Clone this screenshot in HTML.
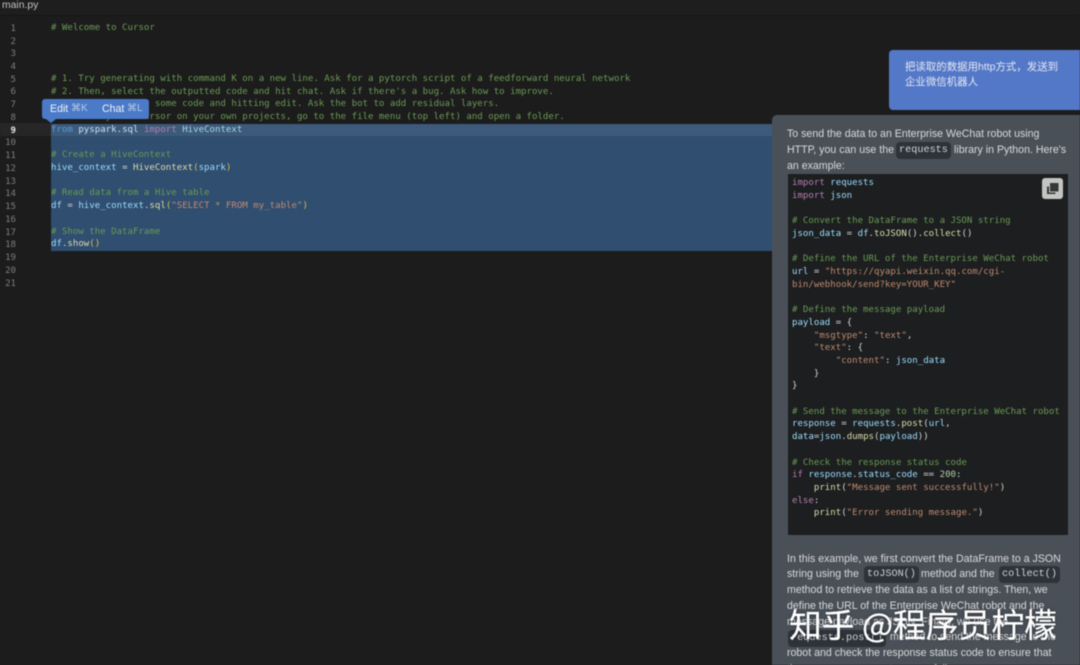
<!DOCTYPE html>
<html lang="zh">
<head>
<meta charset="utf-8">
<title>main.py</title>
<style>
html,body{margin:0;padding:0;width:1080px;height:665px;overflow:hidden;background:#1c1c1c}
#root{position:relative;width:1080px;height:665px;overflow:hidden;background:#1c1c1c;filter:blur(.45px)}
.a{position:absolute;white-space:pre}
.m{font-family:"DejaVu Sans Mono","Liberation Mono",monospace;font-size:9.09px;line-height:13px;height:13px;margin-top:1px}
.n{left:0;width:16px;text-align:right;color:#7a7d80;font-family:"DejaVu Sans Mono","Liberation Mono",monospace;font-size:9.09px;line-height:13px;margin-top:1px}
.s{font-family:"Liberation Sans","Noto Sans CJK SC",sans-serif;font-size:10.6px;line-height:16px;color:#d8dadc;left:787px}
.c{color:#6a9955}.w{color:#d4d4d4}.v{color:#9cdcfe}.f{color:#dcdcaa}.k{color:#b57fb3}.b{color:#569cd6}.t{color:#c08a70}.y{color:#e0bd45}.g{color:#4ec9b0}.l{color:#9cdcfe}
.code{left:792px;font-size:9.08px;line-height:13px;height:13px}
.i{position:absolute;background:#2e333a;border-radius:4px;font-family:"Liberation Mono",monospace;font-size:10.2px;color:#cfd1d3;line-height:18px;height:17px;padding:0 3px;white-space:pre}
</style>
</head>
<body>
<div id="root">
<div class="a" style="left:0;top:0;width:1080px;height:15px;background:#1e1e1e"></div>
<div class="a" style="left:2px;top:-1px;font:10.4px/14px 'Liberation Sans',sans-serif;color:#c0c2c4">main.py</div>
<div class="a" style="left:0;top:15px;width:1080px;height:1px;background:#141414"></div>

<div class="a" style="left:0;top:123px;width:51px;height:13px;background:#262626"></div>
<div class="a" style="left:51px;top:124px;width:730px;height:127px;background:#2f4e70"></div>
<div class="a" style="left:51px;top:124px;width:730px;height:12px;background:#3d5a7b"></div>

<div class="a n" style="top:22px">1</div>
<div class="a n" style="top:35px">2</div>
<div class="a n" style="top:47px">3</div>
<div class="a n" style="top:60px">4</div>
<div class="a n" style="top:73px">5</div>
<div class="a n" style="top:85px">6</div>
<div class="a n" style="top:98px">7</div>
<div class="a n" style="top:111px">8</div>
<div class="a n" style="top:124px;color:#e6e6e6;font-weight:bold">9</div>
<div class="a n" style="top:136px">10</div>
<div class="a n" style="top:149px">11</div>
<div class="a n" style="top:162px">12</div>
<div class="a n" style="top:175px">13</div>
<div class="a n" style="top:187px">14</div>
<div class="a n" style="top:200px">15</div>
<div class="a n" style="top:213px">16</div>
<div class="a n" style="top:226px">17</div>
<div class="a n" style="top:238px">18</div>
<div class="a n" style="top:251px">19</div>
<div class="a n" style="top:264px">20</div>
<div class="a n" style="top:277px">21</div>

<div class="a m c" style="left:51px;top:21px"># Welcome to Cursor</div>
<div class="a m c" style="left:51px;top:72px"># 1. Try generating with command K on a new line. Ask for a pytorch script of a feedforward neural network</div>
<div class="a m c" style="left:51px;top:85px"># 2. Then, select the outputted code and hit chat. Ask if there's a bug. Ask how to improve.</div>
<div class="a m c" style="left:51px;top:97px"># 3. Try selecting some code and hitting edit. Ask the bot to add residual layers.</div>
<div class="a m c" style="left:51px;top:110px"># 4. To try out cursor on your own projects, go to the file menu (top left) and open a folder.</div>
<div class="a m" style="left:51px;top:123px"><span class="b">from</span> <span class="v" style="color:#c8e4f4">pyspark.sql</span> <span class="k">import</span> <span class="v" style="color:#a5d8e6">HiveContext</span></div>
<div class="a m c" style="left:51px;top:148px"># Create a HiveContext</div>
<div class="a m" style="left:51px;top:161px"><span class="v">hive_context</span> <span class="w">=</span> <span class="f">HiveContext</span><span class="y">(</span><span class="v">spark</span><span class="y">)</span></div>
<div class="a m c" style="left:51px;top:186px"># Read data from a Hive table</div>
<div class="a m" style="left:51px;top:199px"><span class="v">df</span> <span class="w">=</span> <span class="v">hive_context</span><span class="w">.</span><span class="f">sql</span><span class="y">(</span><span class="t">"SELECT * FROM my_table"</span><span class="y">)</span></div>
<div class="a m c" style="left:51px;top:225px"># Show the DataFrame</div>
<div class="a m" style="left:51px;top:237px"><span class="v">df</span><span class="w">.</span><span class="f">show</span><span class="y">()</span></div>

<div class="a" style="left:42px;top:99px;width:107px;height:20px;background:#4a7ac8;border-radius:3px"></div>
<div class="a" style="left:46px;top:119px;width:0;height:0;border-left:5px solid transparent;border-right:5px solid transparent;border-top:4px solid #4a7ac8"></div>
<div class="a" style="left:50px;top:102px;font:10.6px/14px 'Liberation Sans','DejaVu Sans',sans-serif;color:#eef2f8">Edit</div>
<div class="a" style="left:71px;top:102px;font:10px/14px 'Liberation Sans','DejaVu Sans',sans-serif;color:#b9cbe6">⌘K</div>
<div class="a" style="left:102px;top:102px;font:10.6px/14px 'Liberation Sans','DejaVu Sans',sans-serif;color:#eef2f8">Chat</div>
<div class="a" style="left:127px;top:102px;font:10px/14px 'Liberation Sans','DejaVu Sans',sans-serif;color:#b9cbe6">⌘L</div>

<div class="a" style="left:889px;top:50px;width:191px;height:60px;background:#5478c8;border-radius:4px 0 0 4px"></div>
<div class="a" style="left:905px;top:60px;font:10.45px/16px 'Liberation Sans','Noto Sans CJK SC',sans-serif;color:#e4e8f2">把读取的数据用http方式，发送到</div>
<div class="a" style="left:905px;top:75px;font:10.45px/16px 'Liberation Sans','Noto Sans CJK SC',sans-serif;color:#e4e8f2">企业微信机器人</div>

<div class="a" style="left:772px;top:115px;width:308px;height:550px;background:#4a5058;border-radius:5px 0 0 0"></div>
<div class="a s" style="top:126px">To send the data to an Enterprise WeChat robot using</div>
<div class="a s" style="top:142px">HTTP, you can use the</div>
<div class="i" style="left:896px;top:141.500px">requests</div>
<div class="a s" style="left:954px;top:142px">library in Python. Here's</div>
<div class="a s" style="top:158px">an example:</div>

<div class="a" style="left:788px;top:174px;width:280px;height:361px;background:#1c1e1f"></div>
<div class="a" style="left:1042px;top:178px;width:21px;height:21px;background:#c4c5c2;border-radius:3px"></div>
<svg class="a" style="left:1042px;top:178px" width="21" height="21" viewBox="0 0 21 21"><rect x="8" y="5" width="8.500" height="8.500" fill="#34383b"/><path d="M5 8.500h2v6h6.500v1.500H5z" fill="#34383b"/></svg>

<div class="a m code" style="top:176px"><span class="k">import</span> <span class="v">requests</span></div>
<div class="a m code" style="top:189px"><span class="k">import</span> <span class="v">json</span></div>
<div class="a m code c" style="top:214px"># Convert the DataFrame to a JSON string</div>
<div class="a m code" style="top:227px"><span class="v">json_data</span> <span class="w">=</span> <span class="v">df</span><span class="w">.</span><span class="f">toJSON</span><span class="w">().</span><span class="f">collect</span><span class="w">()</span></div>
<div class="a m code c" style="top:252px"># Define the URL of the Enterprise WeChat robot</div>
<div class="a m code" style="top:265px"><span class="v">url</span> <span class="w">=</span> <span class="t">"https://qyapi.weixin.qq.com/cgi-</span></div>
<div class="a m code t" style="top:278px">bin/webhook/send?key=YOUR_KEY"</div>
<div class="a m code c" style="top:303px"># Define the message payload</div>
<div class="a m code" style="top:316px"><span class="v">payload</span> <span class="w">= {</span></div>
<div class="a m code" style="top:329px">    <span class="t">"msgtype"</span><span class="w">:</span> <span class="t">"text"</span><span class="w">,</span></div>
<div class="a m code" style="top:341px">    <span class="t">"text"</span><span class="w">: {</span></div>
<div class="a m code" style="top:354px">        <span class="t">"content"</span><span class="w">:</span> <span class="v">json_data</span></div>
<div class="a m code w" style="top:367px">    }</div>
<div class="a m code w" style="top:379px">}</div>
<div class="a m code c" style="top:405px"># Send the message to the Enterprise WeChat robot</div>
<div class="a m code" style="top:417px"><span class="v">response</span> <span class="w">=</span> <span class="v">requests</span><span class="w">.</span><span class="f">post</span><span class="w">(</span><span class="v">url</span><span class="w">,</span></div>
<div class="a m code" style="top:430px"><span class="v">data</span><span class="w">=</span><span class="v">json</span><span class="w">.</span><span class="f">dumps</span><span class="w">(</span><span class="v">payload</span><span class="w">))</span></div>
<div class="a m code c" style="top:456px"># Check the response status code</div>
<div class="a m code" style="top:468px"><span class="k">if</span> <span class="v">response</span><span class="w">.</span><span class="v">status_code</span> <span class="w">==</span> <span style="color:#b5cea8">200</span><span class="w">:</span></div>
<div class="a m code" style="top:481px">    <span class="f">print</span><span class="w">(</span><span class="t">"Message sent successfully!"</span><span class="w">)</span></div>
<div class="a m code" style="top:494px"><span class="k">else</span><span class="w">:</span></div>
<div class="a m code" style="top:506px">    <span class="f">print</span><span class="w">(</span><span class="t">"Error sending message."</span><span class="w">)</span></div>

<div class="a s" style="top:551px">In this example, we first convert the DataFrame to a JSON</div>
<div class="a s" style="top:566px">string using the</div>
<div class="i" style="left:864px;top:566px">toJSON()</div>
<div class="a s" style="left:921px;top:566px">method and the</div>
<div class="i" style="left:999px;top:566px">collect()</div>
<div class="a s" style="top:582px">method to retrieve the data as a list of strings. Then, we</div>
<div class="a s" style="top:598px">define the URL of the Enterprise WeChat robot and the</div>
<div class="a s" style="top:614px">message payload as JSON. Finally, we use the</div>
<div class="i" style="left:788px;top:630px">requests.post()</div>
<div class="a s" style="left:890px;top:629px">method to send the message to the</div>
<div class="a s" style="top:645px">robot and check the response status code to ensure that</div>
<div class="a s" style="top:661px">the message was sent successfully.</div>

<div class="a" style="left:789px;top:602px;font:400 32.800px/44px 'Noto Sans CJK SC','WenQuanYi Zen Hei',sans-serif;color:#fff;-webkit-text-stroke:.25px #fff;text-shadow:0 0 3px rgba(0,0,0,.45)">知乎 @程序员柠檬</div>
</div>
</body>
</html>
